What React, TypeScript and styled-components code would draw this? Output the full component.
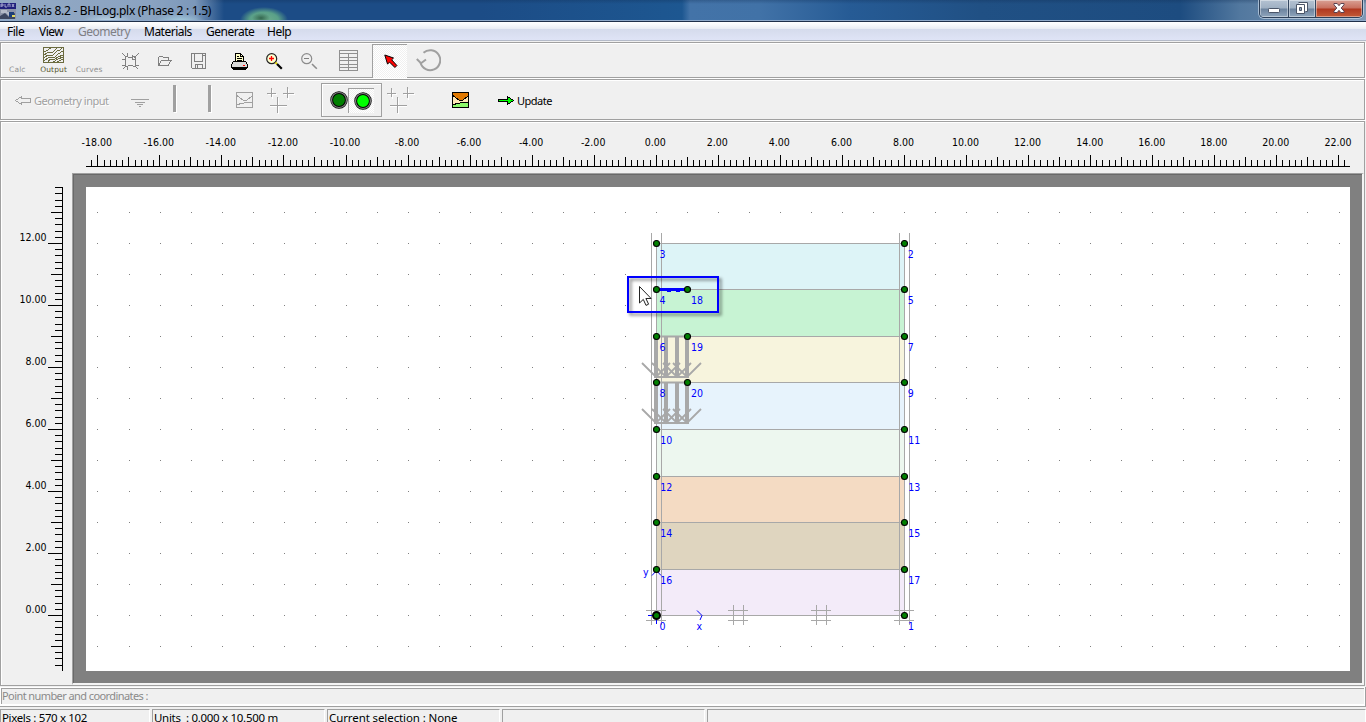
import React from "react";
import styled, { createGlobalStyle } from "styled-components";

const GlobalStyle = createGlobalStyle`
  * { box-sizing: border-box; }
  body { margin: 0; background: #f0f0f0; overflow: hidden; }
  svg { display: block; flex: none; }
`;

const UI_FONT = `"Noto Sans", "Open Sans", sans-serif`;
const DIGIT_FONT = `"DejaVu Sans Condensed", "DejaVu Sans", sans-serif`;

const Window = styled.div`
  width: 1366px;
  height: 722px;
  display: flex;
  flex-direction: column;
  overflow: hidden;
  background: #f0f0f0;
  font-family: ${UI_FONT};
  font-size: 12px;
  color: #000;
  white-space: nowrap;
`;

const TitleBar = styled.header`
  flex: none;
  height: 22px;
  display: flex;
  align-items: flex-start;
  border-bottom: 1px solid #1f2f49;
  box-shadow: inset 0 -1px #8fa9c9;
  background:
    radial-gradient(ellipse 9px 5px at 261px 18px, #33664f 0, transparent 100%),
    radial-gradient(ellipse 24px 13px at 264px 20px, #6fae8c 0, #5aa088 60%, transparent 100%),
    radial-gradient(ellipse 26px 9px at 180px 22px, #a9d3e2 0, transparent 100%),
    radial-gradient(ellipse 26px 9px at 108px 22px, #c2dcea 0, transparent 100%),
    linear-gradient(90deg, #93a9c4 0, #8aa3c1 150px, #7c98ba 195px, rgba(28, 79, 139, 0) 224px),
    linear-gradient(180deg, rgba(16, 44, 82, 0.3) 0, transparent 4px),
    linear-gradient(90deg, #1c4c86 0, #1c4c86 480px, #1d5791 682px, #4373a8 690px, #4172a7 760px, #265b95 850px, #205084 980px, #1d4c80 1180px, #52789f 1240px, #7f99b5 1366px);
`;

const AppIcon = styled.svg`
  width: 16px;
  height: 16px;
  margin-top: 3px;
`;

const Title = styled.div`
  flex: 1;
  padding-left: 5px;
  line-height: 22px;
  letter-spacing: -0.28px;
`;

const Controls = styled.div`
  display: flex;
  height: 18px;
  margin-right: 3px;
  border: 1px solid #2c3f58;
  border-top: 0;
  border-radius: 0 0 5px 5px;
  overflow: hidden;
  box-shadow: 0 0 0 1px rgba(220, 232, 245, 0.6);
`;

const ControlButton = styled.div<{ $w: number; $close?: boolean }>`
  width: ${(p) => p.$w}px;
  display: flex;
  justify-content: center;
  padding-top: 1px;
  box-shadow: inset 0 0 0 1px rgba(255, 255, 255, 0.4);
  border-left: ${(p) => (p.$w === 28 ? "0" : "1px solid #33465f")};
  background: ${(p) =>
    p.$close
      ? "linear-gradient(180deg, #d9a195 0, #c8705f 8px, #b03820 9px, #c25a36 17px)"
      : "linear-gradient(180deg, #b4c2d2 0, #9fb0c3 8px, #6c839e 9px, #8fa5bc 17px)"};
`;

const MenuBar = styled.nav`
  flex: none;
  height: 20px;
  display: flex;
  padding-left: 7px;
  line-height: 20px;
  letter-spacing: -0.5px;
  border-bottom: 1px solid #f0f0f0;
  box-shadow: inset 0 -1px #b4bac8;
  background: linear-gradient(180deg, #fff 0, #f7f8fb 3px, #e8ebf3 7px, #d5dbec 7px, #dfe4f6 18px);
`;

const MenuItem = styled.span<{ $w: number; $off?: boolean }>`
  width: ${(p) => p.$w}px;
  color: ${(p) => (p.$off ? "#7f7f85" : "#000")};
`;

const Toolbar = styled.div<{ $h: number }>`
  flex: none;
  height: ${(p) => p.$h}px;
  margin-right: 1px;
  padding-top: 1px;
  display: flex;
  align-items: center;
  border: 1px solid #a0a0a0;
  box-shadow: inset 1px 1px #fff, 1px 1px #fff;
  margin-bottom: 1px;
`;

const Slot = styled.div<{ $ml?: number; $mt?: number }>`
  flex: none;
  display: flex;
  align-items: center;
  margin-left: ${(p) => p.$ml ?? 0}px;
  margin-top: ${(p) => p.$mt ?? 0}px;
`;

const Caption = styled.span<{ $c: string }>`
  font-family: "DejaVu Sans", sans-serif;
  font-size: 7.5px;
  line-height: 9px;
  letter-spacing: 0.15px;
  color: ${(p) => p.$c};
`;

const OutputButton = styled.div`
  width: 30px;
  margin: 0 7px 0 13px;
  display: flex;
  flex-direction: column;
  align-items: center;
  gap: 2px;
`;

const PressedButton = styled.div<{ $w: number; $h: number }>`
  flex: none;
  width: ${(p) => p.$w}px;
  height: ${(p) => p.$h}px;
  display: flex;
  align-items: center;
  justify-content: center;
  padding: 1px 0 0 2px;
  border-left: 1px solid #a0a0a0;
  border-top: 1px solid #a0a0a0;
  background: conic-gradient(#fff 25%, #f0f0f0 0 50%, #fff 0 75%, #f0f0f0 0) 0 0 / 2px 2px;
`;

const ModeGroup = styled.div`
  width: 61px;
  height: 34px;
  display: flex;
  align-items: center;
  padding-left: 8px;
  border: 1px solid #a0a0a0;
  box-shadow: inset 1px 1px #fff;
`;

const Divider = styled.div`
  width: 3px;
  height: 27px;
  margin-top: -3px;
  background: #a0a0a0;
  box-shadow: 1px 1px #fff;
`;

const ToolLabel = styled.span<{ $off?: boolean }>`
  width: ${(p) => (p.$off ? 76 : 37)}px;
  margin-left: 2px;
  font-size: 11px;
  letter-spacing: -0.5px;
  color: ${(p) => (p.$off ? "#a0a0a0" : "#000")};
  text-shadow: ${(p) => (p.$off ? "1px 1px #fff" : "none")};
`;

const Workspace = styled.main`
  flex: none;
  height: 565px;
  margin-right: 1px;
  display: grid;
  grid-template-columns: 71px 1fr;
  grid-template-rows: 51px 1fr;
  border: 1px solid #a0a0a0;
  box-shadow: inset 1px 1px #fff;
`;

const TopRuler = styled.svg`
  grid-column: 1 / 3;
`;

const Well = styled.div`
  padding: 13px 12px 12px 13px;
  border: 1px solid #a0a0a0;
  border-right: 2px solid #f4f4f4;
  border-bottom: 2px solid #f4f4f4;
  background: #808080;
  box-shadow: inset 1px 1px #696969;
  overflow: hidden;
`;

const CommandPanel = styled.div`
  flex: none;
  height: 20px;
  margin-top: 1px;
  padding: 1px 1px 0 1px;
  background: #fff;
  border-right: 1px solid #a0a0a0;
  border-bottom: 1px solid #a0a0a0;
`;

const CommandField = styled.div`
  height: 16px;
  line-height: 13px;
  font-size: 11px;
  letter-spacing: -0.58px;
  color: #8a8a8a;
  background: #f0f0f0;
  border-left: 1px solid #a0a0a0;
  border-top: 1px solid #a0a0a0;
`;

const StatusBar = styled.footer`
  flex: 1;
  display: flex;
  gap: 2px;
  padding-top: 2px;
`;

const StatusCell = styled.div<{ $w?: number; $track?: number }>`
  ${(p) => (p.$w ? `width: ${p.$w}px;` : "flex: 1;")}
  height: 14px;
  padding-left: 1px;
  line-height: 16px;
  font-size: 11.5px;
  letter-spacing: ${(p) => p.$track ?? -0.1}px;
  white-space: pre;
  border-left: 1px solid #a0a0a0;
  border-top: 1px solid #a0a0a0;
  border-right: 1px solid #fff;
`;

const Svg = ({ w, h, children }: { w: number; h: number; children: React.ReactNode }) => (
  <svg width={w} height={h} viewBox={`0 0 ${w} ${h}`} fill="none" shapeRendering="crispEdges">
    {children}
  </svg>
);

const GREY = "#808080";
const SOFT = "#a0a0a0";

const StarIcon = () => (
  <Svg w={17} h={17}>
    <path d="M3.500 3.500h2l1 1h4l1-1h2M3.500 3.500v10M13.500 3.500v10M3.500 13.500h2l1-1h4l1 1h2" stroke={GREY} />
    <path d="M0 0l4 4M17 0l-5 5M10 2v4h4M1 16l3-3M16 16l-3-3M5.500 0v3M5.500 14v3M0 6.500h4M0 12.500h3M14 12.500h3" stroke={GREY} />
  </Svg>
);
const FolderIcon = () => (
  <Svg w={15} h={13}>
    <path d="M1.500 10V2.500l1-1h3l1 1h5v3M1.500 10.500l3-5h9.500l-3 5z" stroke={GREY} />
  </Svg>
);
const SaveIcon = () => (
  <Svg w={16} h={17}>
    <path d="M.5.500h14v15H1.500l-1-1zM3.500 1v7h8V1M4.500 15.500v-4h7v4M6.500 12v3" stroke={GREY} />
    <path d="M12 2h2" stroke={GREY} />
  </Svg>
);
const PrintIcon = () => (
  <Svg w={17} h={17}>
    <path d="M4.500 8.500v-8h5l3 3v5" fill="#ffffc8" stroke="#000" />
    <path d="M9.500.500v3h3M6 3.500h2M6 5.500h5M6 7.500h5" stroke="#000" />
    <path d="M2.500 8.500h12l2 3v3H.5v-3z" fill="#d8d8d8" stroke="#000" />
    <path d="M1 15.500h15M2 16.500h13" stroke="#000" />
    <path d="M12 12.500h2" stroke="#f00" />
  </Svg>
);
const ZoomIcon = ({ off }: { off?: boolean }) => (
  <svg width="17" height="17" viewBox="0 0 17 17" fill="none">
    <circle cx="5.700" cy="5.700" r="5" fill={off ? "#f0f0f0" : "#ffffd0"} stroke={off ? "#8c8c8c" : "#222"} strokeWidth="1.200" />
    {off ? (
      <path d="M3 5.500h5" stroke={GREY} />
    ) : (
      <path d="M3 5.500h5M5.500 3v5" stroke="#f00" strokeWidth="1.300" />
    )}
    {!off && <path d="M9.500 9.500l1.500 1.500" stroke="#e8d800" strokeWidth="2" />}
    <path d="M11 11l4.800 4.800" stroke={off ? "#8c8c8c" : "#000"} strokeWidth={off ? 1.6 : 2.2} />
  </svg>
);
const TableIcon = () => (
  <Svg w={20} h={22}>
    <path d="M.5.500h18v20H.5zM.5 3.500h18M.5 7.500h18M.5 10.500h18M.5 14.500h18M.5 17.500h18M9.500 3.500v17" stroke="#909090" />
  </Svg>
);
const PointerIcon = () => (
  <svg width="14" height="15" viewBox="0 0 14 15">
    <path d="M.8 1l8.700 3-1.800 1.800 5.200 5.700-2 2-5.300-5.300L3.500 10z" fill="#f00" stroke="#000" strokeWidth="1" />
  </svg>
);
const UndoIcon = () => (
  <svg width="25" height="23" viewBox="0 0 25 23" fill="none">
    <path d="M4.500 13.500A10 10 0 1 0 7.500 3.800" stroke={SOFT} strokeWidth="2" />
    <path d="M.8 10l4.200 4.200L10 10.500" stroke={SOFT} strokeWidth="2" />
  </svg>
);
const OutputIcon = () => (
  <Svg w={22} h={16}>
    <rect x=".5" y=".5" width="20" height="15" stroke="#6b6b3f" />
    <path
      d="M1 5l4-2 4-3M1 8l5-3 4 0 5-5M1 11l4-3 5 0 4-4 3-1 3-3M1 14l5-4 5 1 4-4 5-3M5 15l2-3 4 1 4-3 5-2M10 15l5-3 5-2M14 15l6-3"
      stroke="#6b6b3f"
    />
  </Svg>
);
const GreyCrosses = () => (
  <Svg w={28} h={27}>
    <path d="M1 6.500h9M5.500 2v9M17 6.500h11M21.500 1v11M3 18.500h17M11.500 10v16" stroke="#fff" transform="translate(0 1)" />
    <path d="M0 6.500h9M4.500 1v9M16 6.500h11M20.500 0v11M3 18.500h17M10.500 10v16" stroke={SOFT} />
  </Svg>
);
const MeshIcon = ({ off }: { off?: boolean }) => (
  <Svg w={17} h={17}>
    {!off && <rect width="17" height="16" fill="#ffe9b8" />}
    {!off && <path d="M1 1h15v3l-5 4H7L1 4z" fill="#e07800" />}
    {!off && <path d="M1 12h5l4-1h6v4H1z" fill="#8cf86c" />}
    <path d="M.5.500h16v15H.5zM1 3.500l6 4.500h4l5-4M1 12.500l5-1 4-1h6" stroke={off ? SOFT : "#000"} />
  </Svg>
);
const SideArrow = ({ off }: { off?: boolean }) => (
  <Svg w={17} h={9}>
    {off ? (
      <path d="M.5 4.500l6-4v2h9v4h-9v2z" stroke={SOFT} />
    ) : (
      <path d="M.5 3.500h9v-3l6 4-6 4v-3h-9z" fill="#0f0" stroke="#000" />
    )}
  </Svg>
);
const Lamp = ({ fill }: { fill: string }) => (
  <svg width="18" height="18" viewBox="0 0 18 18">
    <circle cx="9" cy="9" r="7.300" fill={fill} stroke="#000" strokeWidth="2.800" />
    <circle cx="9" cy="9" r="7.500" fill="none" stroke="#808080" strokeWidth="1.200" />
  </svg>
);

const LEFT_X = 656;
const RIGHT_X = 904;

const layers = [
  { y: 243, h: 46, fill: "#ddf4f7", left: "3", right: "2" },
  { y: 289, h: 47, fill: "#c7f3d3", left: "4", right: "5" },
  { y: 336, h: 46, fill: "#f7f4dd", left: "6", right: "7" },
  { y: 382, h: 47, fill: "#e7f3fc", left: "8", right: "9" },
  { y: 429, h: 47, fill: "#edf7ef", left: "10", right: "11" },
  { y: 476, h: 46, fill: "#f4dbc3", left: "12", right: "13" },
  { y: 522, h: 47, fill: "#dfd5bf", left: "14", right: "15" },
  { y: 569, h: 46, fill: "#f3ebf9", left: "16", right: "17" },
];

const gridColumns = Array.from({ length: 41 }, (_, k) => (k === 0 ? 97 : k === 40 ? 1339 : 98 + 31 * k));
const gridRows = Array.from({ length: 15 }, (_, k) => 212 + 31 * k);

const HorizontalRuler = () => {
  const ticks: string[] = [];
  for (let k = -1; k <= 201; k++) {
    const x = Math.round(97.35 + k * 6.204) + 0.5;
    const top = k % 10 === 0 ? 155 : k % 5 === 0 ? 157 : 160;
    ticks.push(`M${x} ${top}V166`);
  }
  return (
    <TopRuler width="1363" height="51" viewBox="1 122 1363 51">
      <path d={ticks.join("") + "M86 166.500H1350"} stroke="#000" fill="none" shapeRendering="crispEdges" />
      {Array.from({ length: 21 }, (_, i) => (
        <text key={i} x={96.700 + i * 62.06} y="146" textAnchor="middle" fontFamily={DIGIT_FONT} fontSize="10.5">
          {(i * 2 - 18).toFixed(2)}
        </text>
      ))}
    </TopRuler>
  );
};

const VerticalRuler = () => {
  const ticks: string[] = [];
  for (let k = -8; k <= 69; k++) {
    const y = Math.round(615 - k * 6.2) + 0.5;
    const left = k % 10 === 0 ? 48 : k % 5 === 0 ? 51 : 55;
    ticks.push(`M${left} ${y}H62`);
  }
  return (
    <svg width="71" height="512" viewBox="1 173 71 512">
      <path d={ticks.join("") + "M62.500 187V671"} stroke="#000" fill="none" shapeRendering="crispEdges" />
      {[0, 2, 4, 6, 8, 10, 12].map((v) => (
        <text key={v} x="46.5" y={613 - v * 31} textAnchor="end" fontFamily={DIGIT_FONT} fontSize="10.5">
          {v.toFixed(2)}
        </text>
      ))}
    </svg>
  );
};

const Node = ({ x, y }: { x: number; y: number }) => (
  <circle cx={x + 0.5} cy={y + 0.5} r="3" fill="#008000" stroke="#000" strokeWidth="1.100" />
);

const NodeLabel = ({ x, y, children }: { x: number; y: number; children: string }) => (
  <text x={x} y={y} fill="#00f" fontFamily={DIGIT_FONT} fontSize="10.5">
    {children}
  </text>
);

const DistributedLoad = ({ top, bottom }: { top: number; bottom: number }) => (
  <g stroke="#a8a8a8" fill="none">
    <path d={`M654 ${top + 0.5}h35M654 ${bottom}h35`} strokeWidth="2" />
    {[656, 666, 677, 687].map((x) => (
      <g key={x}>
        <path d={`M${x} ${top}V${bottom}`} strokeWidth="4" shapeRendering="crispEdges" />
        <path d={`M${x - 14} ${bottom - 14}L${x} ${bottom}L${x + 14} ${bottom - 14}`} strokeWidth="1.800" />
      </g>
    ))}
  </g>
);

const hashMarks = [
  [646, 651],
  [728, 733],
  [811, 816],
  [894, 899],
];

const Model = () => (
  <svg width="1264" height="484" viewBox="86 187 1264 484">
    <defs>
      <filter id="soft" x="-20%" y="-40%" width="150%" height="200%">
        <feGaussianBlur stdDeviation="1.500" />
      </filter>
    </defs>
    <rect x="86" y="187" width="1264" height="484" fill="#fff" />
    <path
      d={gridRows.map((y) => gridColumns.map((x) => `M${x} ${y + 0.5}h1`).join("")).join("")}
      stroke="#808080"
      shapeRendering="crispEdges"
    />
    <g shapeRendering="crispEdges">
      {layers.map((l) => (
        <rect key={l.y} x={LEFT_X} y={l.y} width={RIGHT_X - LEFT_X} height={l.h} fill={l.fill} />
      ))}
      <path
        d={
          layers.map((l) => `M656 ${l.y + 0.5}H904`).join("") +
          "M656 615.500H904M656.500 243V615M904.500 243V615M651.500 233V624M661.500 233V624M899.500 233V624M909.500 233V624"
        }
        stroke="#a8a8a8"
      />
      <path
        d={hashMarks
          .map(([a, b]) => `M${a} 610.500h20M${a} 620.500h20M${b + 0.5} 605v20M${b + 10.5} 605v20`)
          .join("")}
        stroke="#a8a8a8"
      />
    </g>

    <DistributedLoad top={336} bottom={377} />
    <DistributedLoad top={382} bottom={423} />

    <rect x="630.500" y="279.500" width="90" height="35" fill="none" stroke="#000" strokeOpacity=".4" strokeWidth="2.500" filter="url(#soft)" />
    <rect x="628" y="277" width="90" height="35" fill="none" stroke="#00f" strokeWidth="2" />
    <path d="M660 289.500h27" stroke="#00f" strokeWidth="3" />
    <path d="M667 291.500h4M676 291.500h4" stroke="#00f" />

    <g stroke="#00f" fill="none">
      <path d="M652 575.500l4.500-5 4.500 5M697 610.500l5 5-2 4.500M648 615.500h5M656.500 619v5" />
    </g>

    {layers.map((l) => (
      <g key={l.y}>
        <Node x={LEFT_X} y={l.y} />
        <Node x={RIGHT_X} y={l.y} />
        <NodeLabel x={l.left.length > 1 ? 660.3 : 659.5} y={l.y + 15}>{l.left}</NodeLabel>
        <NodeLabel x={l.right.length > 1 ? 908.3 : 907.8} y={l.y + 15}>{l.right}</NodeLabel>
      </g>
    ))}
    <Node x={687} y={289} />
    <Node x={687} y={336} />
    <Node x={687} y={382} />
    <NodeLabel x={691} y={304}>18</NodeLabel>
    <NodeLabel x={691} y={351}>19</NodeLabel>
    <NodeLabel x={691} y={397}>20</NodeLabel>

    <circle cx={LEFT_X + 0.5} cy="615.500" r="3.500" fill="#008000" stroke="#000" strokeWidth="2" />
    <Node x={RIGHT_X} y={615} />
    <NodeLabel x={659.5} y={630}>0</NodeLabel>
    <NodeLabel x={908} y={630}>1</NodeLabel>
    <NodeLabel x={696.5} y={630}>x</NodeLabel>
    <NodeLabel x={643} y={576}>y</NodeLabel>

    <path
      d="M639.500 286.500v16.500l3.800-3.600 2.700 6 2.600-1.200-2.700-5.700h5.200z"
      fill="#fff"
      stroke="#222"
      strokeWidth="1"
    />
  </svg>
);

export default function App() {
  return (
    <Window>
      <GlobalStyle />
      <TitleBar>
        <AppIcon viewBox="0 0 16 16">
          <rect width="16" height="16" fill="#8c94a8" />
          <rect width="16" height="6" fill="#20207c" />
          <path d="M1 4V1h2v2H1M5 1v3h2M8 4V1h2v3M12 1l2 3M14 1l-2 3" stroke="#d8d8f0" strokeWidth=".7" fill="none" />
          <path d="M1 7h6v2h4l4 4H9l-3-3H1z" fill="#b4bac8" />
          <path d="M0 13l5-3 4 4 6-4v6H0z" fill="#3c4660" />
          <path d="M9 9h5v5H9z" fill="#1e3e78" />
          <path d="M12 12h3v2h-3z" fill="#e0d860" />
        </AppIcon>
        <Title>Plaxis 8.2 - BHLog.plx (Phase 2 : 1.5)</Title>
        <Controls>
          <ControlButton $w={28}>
            <svg width="14" height="14" viewBox="0 0 14 14">
              <rect x="1.500" y="7.500" width="11" height="4" rx=".8" fill="#fff" stroke="#4a5568" />
            </svg>
          </ControlButton>
          <ControlButton $w={27}>
            <svg width="14" height="14" viewBox="0 0 14 14">
              <path d="M3.500 1.500h9v9h-2" fill="#fff" stroke="#4a5568" />
              <path d="M1.500 3.500h8v9h-8z" fill="#fff" stroke="#4a5568" />
              <path d="M4.500 6.500h2v3h-2z" fill="#8fa5bc" stroke="#4a5568" />
            </svg>
          </ControlButton>
          <ControlButton $w={47} $close>
            <svg width="14" height="14" viewBox="0 0 14 14">
              <path
                d="M2 2.500h3.200L7 4.700l1.800-2.200H12v1.300L9.200 7l2.800 3.200v1.300H8.800L7 9.300l-1.800 2.200H2v-1.300L4.800 7 2 3.800z"
                fill="#fff"
                stroke="#5a4250"
              />
            </svg>
          </ControlButton>
        </Controls>
      </TitleBar>

      <MenuBar>
        <MenuItem $w={32}>File</MenuItem>
        <MenuItem $w={39}>View</MenuItem>
        <MenuItem $w={66} $off>Geometry</MenuItem>
        <MenuItem $w={62}>Materials</MenuItem>
        <MenuItem $w={61}>Generate</MenuItem>
        <MenuItem $w={40}>Help</MenuItem>
      </MenuBar>

      <Toolbar $h={36}>
        <Slot $ml={8} $mt={17}><Caption $c="#909090">Calc</Caption></Slot>
        <OutputButton>
          <OutputIcon />
          <Caption $c="#55552c">Output</Caption>
        </OutputButton>
        <Slot $mt={17}><Caption $c="#909090">Curves</Caption></Slot>
        <Slot $ml={19} $mt={1}><StarIcon /></Slot>
        <Slot $ml={18} $mt={1}><FolderIcon /></Slot>
        <Slot $ml={19} $mt={1}><SaveIcon /></Slot>
        <Slot $ml={24} $mt={1}><PrintIcon /></Slot>
        <Slot $ml={18} $mt={1}><ZoomIcon /></Slot>
        <Slot $ml={18} $mt={1}><ZoomIcon off /></Slot>
        <Slot $ml={21}><TableIcon /></Slot>
        <Slot $ml={13}>
          <PressedButton $w={35} $h={34}><PointerIcon /></PressedButton>
        </Slot>
        <Slot $ml={9}><UndoIcon /></Slot>
      </Toolbar>

      <Toolbar $h={41}>
        <Slot $ml={14}><SideArrow off /><ToolLabel $off>Geometry input</ToolLabel></Slot>
        <Slot $ml={21} $mt={5}>
          <Svg w={18} h={8}>
            <path d="M0 .5h18M4 3.500h10M6 5.500h6M8 7.500h2" stroke={SOFT} />
          </Svg>
        </Slot>
        <Slot $ml={24}><Divider /></Slot>
        <Slot $ml={32}><Divider /></Slot>
        <Slot $ml={25} $mt={1}><MeshIcon off /></Slot>
        <Slot $ml={14} $mt={1}><GreyCrosses /></Slot>
        <Slot $ml={26}>
          <ModeGroup>
            <Lamp fill="#008000" />
            <PressedButton $w={26} $h={25}><Lamp fill="#00ff00" /></PressedButton>
          </ModeGroup>
        </Slot>
        <Slot $ml={5} $mt={1}><GreyCrosses /></Slot>
        <Slot $ml={37} $mt={1}><MeshIcon /></Slot>
        <Slot $ml={29}><SideArrow /><ToolLabel>Update</ToolLabel></Slot>
      </Toolbar>

      <Workspace>
        <HorizontalRuler />
        <VerticalRuler />
        <Well><Model /></Well>
      </Workspace>

      <CommandPanel>
        <CommandField>Point number and coordinates :</CommandField>
      </CommandPanel>

      <StatusBar>
        <StatusCell $w={150} $track={-0.35}>Pixels : 570 x 102</StatusCell>
        <StatusCell $w={173} $track={-0.3}>{"Units  : 0.000 x 10.500 m"}</StatusCell>
        <StatusCell $w={173}>Current selection : None</StatusCell>
        <StatusCell $w={203}></StatusCell>
        <StatusCell></StatusCell>
      </StatusBar>
    </Window>
  );
}
